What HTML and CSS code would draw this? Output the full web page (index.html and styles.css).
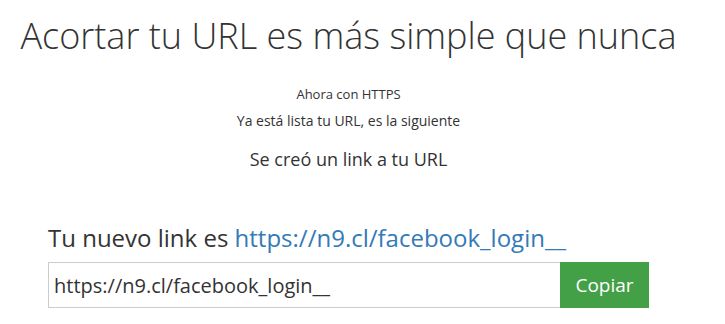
FILE: index.html
```html
<!DOCTYPE html>
<html lang="es">
<head>
    <meta charset="UTF-8">
    <title>Acortador de URL</title>
    <link rel="stylesheet" href="styles.css">
</head>
<body>
    <div class="page">
        <h1 class="title">Acortar tu URL es más simple que nunca</h1>
        <p class="note">Ahora con HTTPS</p>
        <p class="ready">Ya está lista tu URL, es la siguiente</p>
        <p class="created">Se creó un link a tu URL</p>

        <div class="result">
            <h2 class="result-title">Tu nuevo link es <a href="#">https://n9.cl/facebook_login__</a></h2>
            <div class="copy-row">
                <input class="copy-input" type="text" value="https://n9.cl/facebook_login__" readonly>
                <button class="copy-btn">Copiar</button>
            </div>
        </div>
    </div>
</body>
</html>
```

FILE: styles.css
```css
*{
    margin: 0;
    padding: 0;
    box-sizing: border-box;
}
body{
    font-family: "Open Sans", "Liberation Sans", sans-serif;
    color: #333;
    background: #fff;
}
.page{
    width: 697px;
    display: flex;
    flex-direction: column;
    align-items: center;
    text-align: center;
}
.title{
    font-weight: 300;
    font-size: 36px;
    line-height: 52px;
    margin-top: 10px;
}
.note{
    font-size: 13px;
    line-height: 17px;
    margin-top: 24px;
}
.ready{
    font-size: 14px;
    line-height: 18px;
    margin-top: 9px;
}
.created{
    font-size: 18px;
    line-height: 22px;
    margin-top: 18px;
}
.result{
    width: 601px;
    margin-top: 53px;
    text-align: left;
}
.result-title{
    font-weight: 400;
    font-size: 24px;
    line-height: 30px;
}
.result-title a{
    color: #337ab7;
    text-decoration: none;
}
.copy-row{
    display: flex;
    margin-top: 9px;
}
.copy-input{
    flex: 1;
    height: 46px;
    border: 1px solid #ccc;
    border-right: none;
    padding: 0 5px;
    font-family: inherit;
    font-size: 20px;
    color: #333;
    outline: none;
}
.copy-btn{
    width: 89px;
    height: 46px;
    border: none;
    background: #43a047;
    color: #fff;
    font-family: inherit;
    font-size: 19px;
    cursor: pointer;
}
```
